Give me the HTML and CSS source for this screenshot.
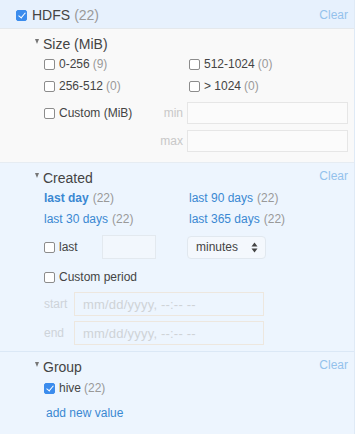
FILE: index.html
```html
<!DOCTYPE html>
<html lang="en">
<head>
    <meta charset="UTF-8">
    <meta name="viewport" content="width=device-width, initial-scale=1.0">
    <title>Facets</title>
    <link rel="stylesheet" href="styles.css">
</head>
<body>
    <div class="panel">
        <div class="facet-head">
            <label class="head-label"><span class="cb checked"></span>HDFS <span class="count">(22)</span></label>
            <a class="clear">Clear</a>
        </div>

        <div class="section grey">
            <div class="title-row">
                <span class="title"><span class="caret"></span>Size (MiB)</span>
            </div>
            <div class="options">
                <label class="opt"><span class="cb"></span>0-256 <span class="count">(9)</span></label>
                <label class="opt"><span class="cb"></span>512-1024 <span class="count">(0)</span></label>
                <label class="opt"><span class="cb"></span>256-512 <span class="count">(0)</span></label>
                <label class="opt"><span class="cb"></span>&gt; 1024 <span class="count">(0)</span></label>
            </div>
            <div class="range">
                <label class="opt"><span class="cb"></span>Custom (MiB)</label>
                <span class="field-label">min</span>
                <input class="field wide" type="text">
                <span></span>
                <span class="field-label">max</span>
                <input class="field wide" type="text">
            </div>
        </div>

        <div class="section blue">
            <div class="title-row">
                <span class="title"><span class="caret"></span>Created</span>
                <a class="clear">Clear</a>
            </div>
            <div class="options links">
                <div class="opt"><a class="link bold">last day</a><span class="count">(22)</span></div>
                <div class="opt"><a class="link">last 90 days</a><span class="count">(22)</span></div>
                <div class="opt"><a class="link">last 30 days</a><span class="count">(22)</span></div>
                <div class="opt"><a class="link">last 365 days</a><span class="count">(22)</span></div>
            </div>
            <div class="last-row">
                <label class="opt last"><span class="cb"></span>last</label>
                <input class="field small" type="text">
                <div class="select">
                    <span>minutes</span>
                    <svg width="7" height="11" viewBox="0 0 7 11"><path d="M3.5 0.5 L6.5 4.5 L0.5 4.5 Z M3.5 10.5 L6.5 6.5 L0.5 6.5 Z" fill="#444"/></svg>
                </div>
            </div>
            <label class="opt period"><span class="cb"></span>Custom period</label>
            <div class="dates">
                <span class="field-label">start</span>
                <input class="field date" type="text" placeholder="mm/dd/yyyy, --:-- --">
                <span class="field-label">end</span>
                <input class="field date" type="text" placeholder="mm/dd/yyyy, --:-- --">
            </div>
        </div>

        <div class="section blue last-section">
            <div class="title-row">
                <span class="title"><span class="caret"></span>Group</span>
                <a class="clear">Clear</a>
            </div>
            <label class="opt single"><span class="cb checked"></span>hive <span class="count">(22)</span></label>
            <div class="opt single"><a class="link add">add new value</a></div>
        </div>
    </div>
</body>
</html>
```

FILE: styles.css
```css
:root {
    --text: #444;
    --muted: #999;
    --faint: #ccc;
    --link: #3a88d2;
    --clear: #94c2ec;
    --blue-bg: #edf5fe;
    --head-bg: #e7f1fd;
    --grey-bg: #f9f9f9;
    --check: #3b8ced;
}

html, body {
    margin: 0;
    padding: 0;
}

body {
    font-family: "Liberation Sans", Arial, sans-serif;
    color: var(--text);
    background: var(--blue-bg);
    width: 355px;
    height: 434px;
    overflow: hidden;
}

.panel {
    border-right: 1px solid #dfeaf6;
    height: 434px;
    box-sizing: border-box;
}

.facet-head {
    height: 28px;
    background: var(--head-bg);
    border-bottom: 1px solid #e4e8ec;
    display: flex;
    justify-content: space-between;
    align-items: center;
    padding: 0 6px 0 16px;
}

.head-label {
    display: flex;
    align-items: center;
    font-size: 14px;
    padding-top: 2px;
}

.head-label .cb {
    margin-right: 5px;
}

.head-label .count {
    margin-left: 4px;
}

.clear {
    font-size: 12px;
    line-height: 14px;
    color: var(--clear);
    cursor: pointer;
}

.facet-head .clear {
    padding-top: 2px;
}

.count {
    color: var(--muted);
    margin-left: 3px;
}

.section {
    padding: 6px 6px 6px 35px;
}

.section.grey {
    background: var(--grey-bg);
    border-bottom: 1px solid #e6ecf2;
    padding-bottom: 10px;
}

.section.blue {
    background: var(--blue-bg);
    border-bottom: 1px solid #dbe8f6;
}

.section.last-section {
    border-bottom: none;
}

.title-row {
    display: flex;
    justify-content: space-between;
    align-items: flex-start;
    height: 18px;
}

.title {
    display: flex;
    align-items: center;
    font-size: 14px;
    line-height: 18px;
}

.caret {
    width: 0;
    height: 0;
    border-left: 2.5px solid transparent;
    border-right: 2.5px solid transparent;
    border-top: 5px solid #777;
    margin: 0 4px 5px 0;
}

.options {
    display: grid;
    grid-template-columns: 145px 1fr;
    margin-left: 9px;
}

.opt {
    display: flex;
    align-items: center;
    height: 22px;
    font-size: 12px;
}

.links .opt {
    height: 21px;
}

.links .count {
    margin-left: 4px;
}

.cb {
    width: 11px;
    height: 11px;
    box-sizing: border-box;
    border: 1px solid #8c8c8c;
    border-radius: 2px;
    background: #fff;
    margin-right: 4px;
    position: relative;
    flex: none;
}

.cb.checked {
    background: var(--check);
    border-color: var(--check);
}

.cb.checked::after {
    content: "";
    position: absolute;
    left: 3px;
    top: 0px;
    width: 3px;
    height: 6px;
    border-right: 1.6px solid #fff;
    border-bottom: 1.6px solid #fff;
    transform: rotate(40deg);
}

.range {
    display: grid;
    grid-template-columns: 1fr auto 161px;
    column-gap: 4px;
    row-gap: 6px;
    margin: 5px 0 0 9px;
}

.field-label {
    font-size: 12px;
    color: var(--faint);
    align-self: center;
    text-align: right;
}

.range .field-label {
    color: #c8c8c8;
}

.field {
    box-sizing: border-box;
    border: 1px solid #e6e6e6;
    background: transparent;
    font-family: inherit;
    outline: none;
    margin: 0;
}

.field.wide {
    height: 22px;
    width: 161px;
    background: #fbfbfb;
}

.link {
    color: var(--link);
    cursor: pointer;
}

.link.bold {
    font-weight: bold;
}

.last-row {
    display: flex;
    align-items: center;
    margin: 6px 0 0 9px;
    height: 24px;
}

.opt.last {
    width: 58px;
}

.field.small {
    width: 54px;
    height: 24px;
    border-color: #e3e9ef;
    background: #f2f7fd;
}

.select {
    margin-left: 31px;
    width: 79px;
    height: 23px;
    box-sizing: border-box;
    border: 1px solid #e1e8ef;
    border-radius: 4px;
    background: #f4f8fd;
    display: flex;
    justify-content: space-between;
    align-items: center;
    padding: 0 7px 0 8px;
    font-size: 12px;
}

.opt.period {
    margin: 7px 0 0 9px;
}

.dates {
    display: grid;
    grid-template-columns: 30px 190px;
    row-gap: 5px;
    margin: 4px 0 0 9px;
}

.dates .field-label {
    text-align: left;
    color: #cdd3d9;
    font-size: 12px;
}

.field.date {
    height: 24px;
    width: 190px;
    border-color: #ede7df;
    background: var(--blue-bg);
    padding-left: 8px;
    font-size: 13px;
    letter-spacing: 0.2px;
}

.field.date::placeholder {
    color: #cfd3d7;
}

.single {
    margin-left: 9px;
}

.opt.single {
    height: 22px;
}

.title-row + .single {
    margin-top: 1px;
}

.add {
    margin-top: 5px;
    display: inline-block;
    padding-left: 2px;
}
```
